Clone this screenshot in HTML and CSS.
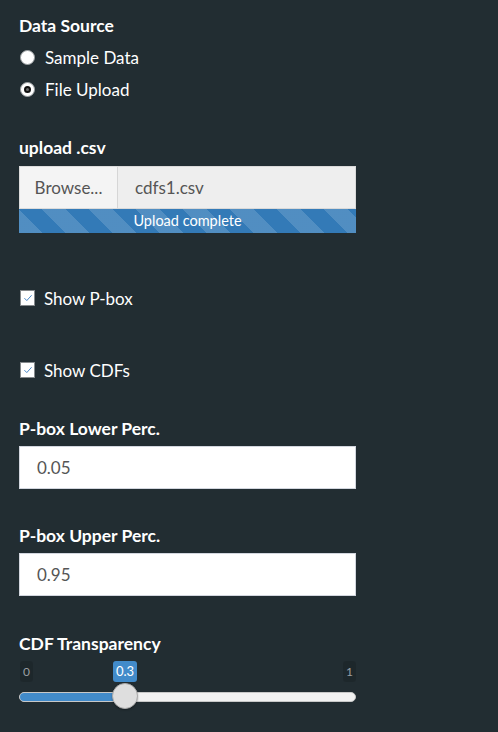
FILE: index.html
```html
<!DOCTYPE html>
<html>
<head>
<meta charset="utf-8">
<link rel="stylesheet" href="styles.css">
</head>
<body>
<div class="sidebar">
  <div class="group group-source">
    <div class="label">Data Source</div>
    <div class="radios">
      <div class="opt"><span class="radio"></span><span>Sample Data</span></div>
      <div class="opt"><span class="radio checked"></span><span>File Upload</span></div>
    </div>
  </div>

  <div class="group group-upload">
    <div class="label">upload .csv</div>
    <div class="file-row">
      <div class="browse">Browse...</div>
      <div class="filename">cdfs1.csv</div>
    </div>
    <div class="progress">Upload complete</div>
  </div>

  <div class="opt check-row first-check">
    <span class="checkbox"><svg viewBox="0 0 14 14"><path d="M2.8 7.2 L5.6 10 L11.2 3.8" fill="none" stroke="#3f7fc4" stroke-width="1.1"/></svg></span>
    <span>Show P-box</span>
  </div>
  <div class="opt check-row second-check">
    <span class="checkbox"><svg viewBox="0 0 14 14"><path d="M2.8 7.2 L5.6 10 L11.2 3.8" fill="none" stroke="#3f7fc4" stroke-width="1.1"/></svg></span>
    <span>Show CDFs</span>
  </div>

  <div class="group group-lower">
    <div class="label">P-box Lower Perc.</div>
    <div class="num-input">0.05</div>
  </div>

  <div class="group group-upper">
    <div class="label">P-box Upper Perc.</div>
    <div class="num-input">0.95</div>
  </div>

  <div class="group group-slider">
    <div class="label">CDF Transparency</div>
    <div class="slider">
      <span class="grid-min">0</span>
      <span class="grid-max">1</span>
      <span class="badge" style="left: 94px;">0.3</span>
      <div class="track">
        <div class="fill" style="width: 106px;"></div>
      </div>
      <span class="handle" style="left: 93px;"></span>
    </div>
  </div>
</div>
</body>
</html>
```

FILE: styles.css
```css
html, body {
  margin: 0;
  padding: 0;
  background: #222d32;
  height: 100%;
}

body {
  font-family: Lato, "Open Sans", sans-serif;
  color: #ffffff;
  font-size: 17px;
}

.sidebar {
  width: 337px;
  padding: 15px 19px 0 19px;
  display: flex;
  flex-direction: column;
}

.label {
  font-weight: bold;
  font-size: 17.5px;
  line-height: 21px;
  height: 21px;
}

.radios {
  display: flex;
  flex-direction: column;
  margin-top: 5px;
}

.opt {
  display: flex;
  align-items: center;
  height: 32px;
  font-size: 17px;
  gap: 10px;
}

.radio {
  width: 15px;
  height: 15px;
  box-sizing: border-box;
  border-radius: 50%;
  background: #ffffff;
  border: 1px solid #9a9ea1;
  margin-left: 1px;
  display: flex;
  align-items: center;
  justify-content: center;
}

.radio.checked::after {
  content: "";
  width: 3px;
  height: 3px;
  border-radius: 50%;
  border: 2.5px solid #111111;
  background: #6a6a6a;
}

.group-upload {
  margin-top: 32px;
}

.group-upload .label {
  margin-bottom: 8px;
}

.file-row {
  display: flex;
  height: 43px;
  color: #555555;
}

.browse {
  width: 99px;
  box-sizing: border-box;
  background: #f4f4f4;
  border: 1px solid #dcdcdc;
  border-right: 1px solid #d6d6d6;
  display: flex;
  align-items: center;
  justify-content: center;
  font-size: 17px;
}

.filename {
  flex: 1;
  box-sizing: border-box;
  background: #eeeeee;
  border: 1px solid #d9d9d9;
  border-left: none;
  display: flex;
  align-items: center;
  padding-left: 17px;
  font-size: 17px;
}

.progress {
  height: 24px;
  background-color: #337ab7;
  background-image: repeating-linear-gradient(45deg, rgba(255,255,255,0.15) 0, rgba(255,255,255,0.15) 16.6px, transparent 16.6px, transparent 33.2px);
  color: #ffffff;
  font-size: 14.5px;
  line-height: 24px;
  text-align: center;
}

.checkbox {
  width: 15px;
  height: 16px;
  box-sizing: border-box;
  background: #ffffff;
  border: 1.5px solid #85898c;
  margin-left: 1px;
  display: flex;
  align-items: center;
  justify-content: center;
}

.checkbox svg {
  width: 12px;
  height: 12px;
}

.check-row {
  gap: 9px;
}

.first-check {
  margin-top: 49px;
}

.second-check {
  margin-top: 40px;
}

.group-lower {
  margin-top: 32px;
}

.group-upper {
  margin-top: 36px;
}

.group-lower .label,
.group-upper .label {
  margin-bottom: 7px;
}

.num-input {
  height: 43px;
  box-sizing: border-box;
  background: #ffffff;
  border: 1px solid #d2d6de;
  color: #555555;
  display: flex;
  align-items: center;
  padding-left: 17px;
  font-size: 17px;
}

.group-slider {
  margin-top: 37px;
}

.slider {
  position: relative;
  margin-top: 7px;
  height: 55px;
}

.grid-min,
.grid-max {
  position: absolute;
  top: 0;
  height: 21px;
  padding: 0 3px;
  background: rgba(0, 0, 0, 0.12);
  border-radius: 3px;
  color: #9a9fa3;
  font-size: 12px;
  line-height: 21px;
}

.grid-min {
  left: 1px;
}

.grid-max {
  right: 0;
}

.badge {
  position: absolute;
  top: 0;
  width: 24px;
  height: 21px;
  background: #428bca;
  border-radius: 3px;
  color: #ffffff;
  font-size: 13px;
  line-height: 21px;
  text-align: center;
}

.track {
  position: absolute;
  left: 0;
  right: 0;
  top: 31px;
  height: 10px;
  box-sizing: border-box;
  border-radius: 5px;
  background: #f2f2f2;
  border: 1px solid #c8c8c8;
  overflow: hidden;
}

.fill {
  height: 100%;
  background: #428bca;
}

.handle {
  position: absolute;
  top: 22px;
  width: 26px;
  height: 26px;
  box-sizing: border-box;
  border-radius: 50%;
  background: #dedede;
  border: 1px solid #aaaaaa;
  box-shadow: 0 1px 2px rgba(0, 0, 0, 0.3);
}
```
